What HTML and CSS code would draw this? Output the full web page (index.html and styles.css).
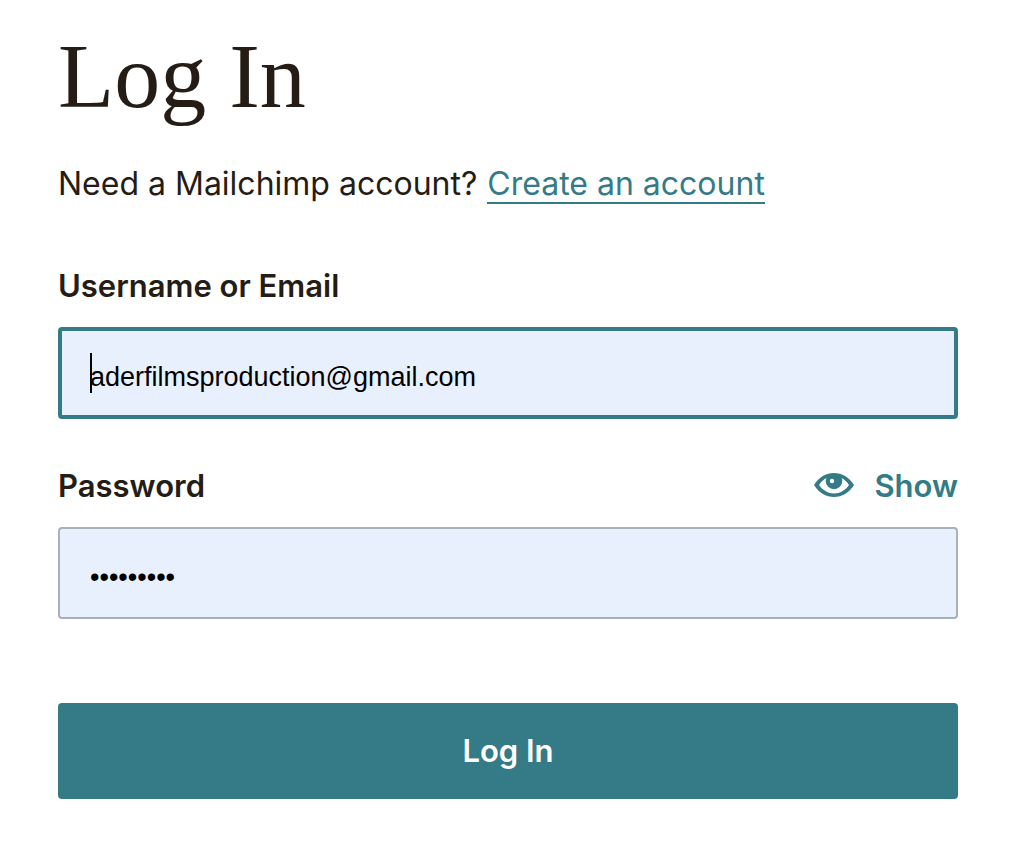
FILE: index.html
```html
<!DOCTYPE html>
<html lang="en">
<head>
<meta charset="utf-8">
<meta name="viewport" content="width=device-width, initial-scale=1">
<title>Log In</title>
<link rel="stylesheet" href="styles.css">
</head>
<body>
<main class="login">
  <h1 class="title">Log In</h1>
  <p class="intro">Need a Mailchimp account? <a class="link" href="#">Create an account</a></p>
  <form class="form">
    <div class="field">
      <label class="label" for="username">Username or Email</label>
      <div class="input-wrap">
        <input class="input input-active" id="username" type="text" value="aderfilmsproduction@gmail.com">
        <span class="caret"></span>
      </div>
    </div>
    <div class="field">
      <div class="label-row">
        <label class="label" for="password">Password</label>
        <button class="show" type="button">
          <svg class="eye" viewBox="0 0 40 28" aria-hidden="true">
            <path fill="currentColor" fill-rule="evenodd" d="M0 13C5 5 12 1 20 1S35 5 40 13C35 21 28 25 20 25S5 21 0 13ZM5 13C9 18.500 14 21.500 20 21.500S31 18.500 35 13C33 10 30.500 7.500 27.500 6Q28.300 7.500 28.300 9A8.300 8.300 0 0 1 11.700 9Q11.700 7.500 12.500 6C9.500 7.500 7 10 5 13Z"/>
            <circle cx="18" cy="9" r="2.200" fill="#fff"/>
          </svg>
          Show
        </button>
      </div>
      <input class="input" id="password" type="password" value="password1">
    </div>
    <button class="submit" type="submit">Log In</button>
  </form>
</main>
</body>
</html>
```
FILE: styles.css
```css
* { box-sizing: border-box; }
body {
  margin: 0;
  background: #fff;
  color: #241c15;
  font-family: Inter, "Liberation Sans", sans-serif;
}
.login { padding: 32px 72px 48px 58px; }
.title {
  margin: 0;
  font: 400 92px/88px "Liberation Serif", serif;
}
.intro {
  margin: 40px 0 0;
  font-size: 32px;
  font-weight: 400;
  line-height: 48px;
}
.link {
  display: inline-block;
  margin-left: 1px;
  color: #347b87;
  line-height: 36px;
  text-decoration: none;
  border-bottom: 2px solid currentColor;
}
.form {
  display: flex;
  flex-direction: column;
  margin-top: 54px;
}
.field {
  display: flex;
  flex-direction: column;
  gap: 17px;
  margin-bottom: 43px;
}
.label-row {
  display: flex;
  justify-content: space-between;
}
.label {
  font-size: 31px;
  font-weight: 600;
  line-height: 48px;
}
.input-wrap { position: relative; display: flex; }
.input {
  width: 100%;
  height: 92px;
  padding: 8px 30px 0;
  border: 2px solid #a9b0b8;
  border-radius: 4px;
  outline: 0;
  background: #e8f0fe;
  color: #000;
  font: 27px "Liberation Sans", sans-serif;
}
.input-active { padding: 8px 28px 0; border: 4px solid #347b87; }
.caret {
  position: absolute;
  left: 32px;
  top: 26px;
  width: 2px;
  height: 40px;
  background: #000;
}
.show {
  display: flex;
  align-items: center;
  gap: 20px;
  padding: 0;
  border: 0;
  background: none;
  color: #347b87;
  font: 600 31px/48px Inter, "Liberation Sans", sans-serif;
}
.eye { width: 40px; height: 28px; }
.submit {
  height: 96px;
  margin-top: 41px;
  border: 0;
  border-radius: 4px;
  background: #347b87;
  color: #fff;
  font: 600 31px/48px Inter, "Liberation Sans", sans-serif;
}
```
